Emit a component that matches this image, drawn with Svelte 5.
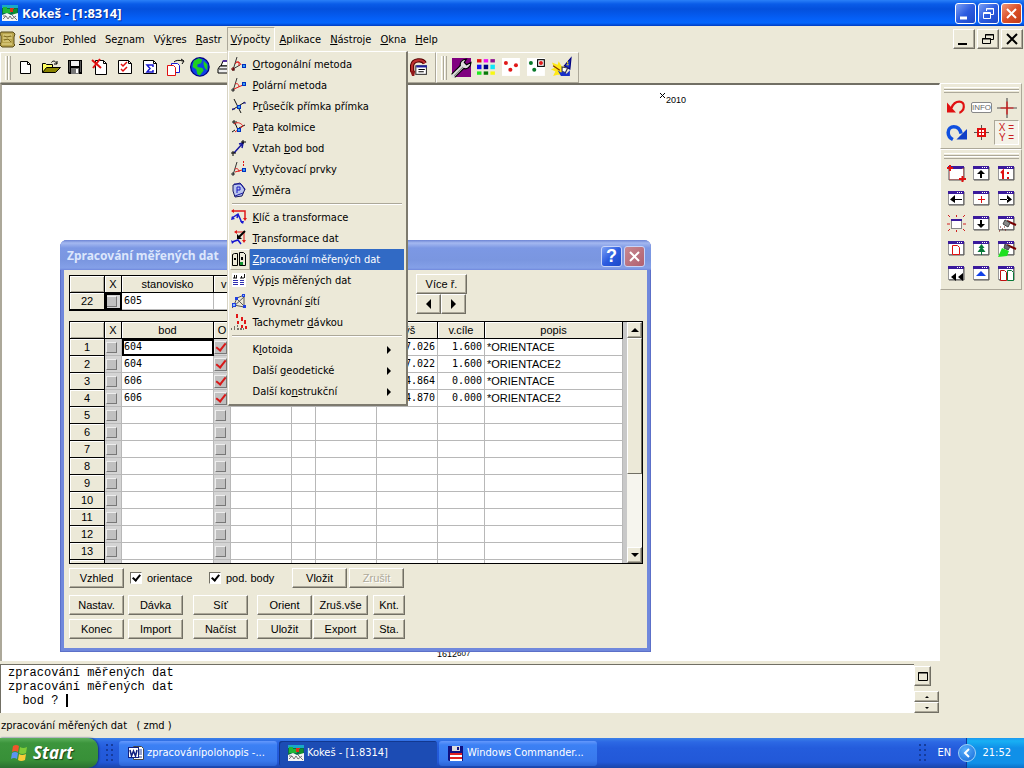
<script>
  const win =
    '<rect x="0.5" y="1.5" width="15" height="13" fill="#fff" stroke="#9a9a9a"/><path d="M16 2v13M1 15h15" stroke="#555"/><rect x="0" y="1" width="16" height="3" fill="#3a1a9c"/><path d="M9 2h1v1h-1zM11 2h1v1h-1zM13 2h1v1h-1z" fill="#fff"/>';
  const page = '<path d="M3.5 2.5h7l3 3v9h-10z" fill="#fff" stroke="#000"/><path d="M10.5 2.5v3h3" fill="none" stroke="#000"/>';
  const node = (x, y) => `<rect x="${x}.5" y="${y}.5" width="3" height="3" fill="#3aa0f0" stroke="#0030c0"/>`;

  const icons = {
    kokes:
      '<rect width="16" height="16" fill="#087048"/><path d="M0 0h16v3H0z" fill="#18a8c8"/><path d="M1 2h4v2h4v4H1z" fill="#20b838"/><path d="M8 3h4v4H8z" fill="#e03018"/><path d="M11 4h4v5h-4z" fill="#10902c"/><path d="M0 10l5-2 4 2 7-2v8H0z" fill="#f4f4f4"/><path d="M1 14l3-3 2 3 2-3 2 3 4-3M1 11h3M10 10l5 5" stroke="#777" fill="none"/>',
    scroll:
      '<path d="M1 1h12l2 2-1 3v7l1 1-2 2H2l-2-2 1-3V5L0 3z" fill="#b9a54e" stroke="#5b4c18"/><path d="M3 4h9M3 7h9M3 10h8M2 13h10" stroke="#e9dc93"/><path d="M4 5l3 1 4-1M4 9l4-1 3 3" stroke="#7d6a22" fill="none"/>',
    blank: page,
    open:
      '<path d="M0.5 13.5v-9h3l1 1h6v3" fill="#ffff60" stroke="#000"/><path d="M0.5 13.5l4-5h14l-5 5z" fill="#8a8400" stroke="#000"/><path d="M9.5 3.5c1-2 4-2 5 1M15 2v3h-3" fill="none" stroke="#000"/>',
    save:
      '<path d="M1 1h14v14H2l-1-1z" fill="#000"/><path d="M4 2h8v5H4z" fill="#f0f0f0"/><path d="M2 2h1v11H2zM13 2h1v11h-1z" fill="#555"/><path d="M4 9h8v6H4z" fill="#777"/><path d="M9 10h2v4H9z" fill="#fff"/>',
    del: '<path d="M3.5 1.500h8l3 3v11h-11z" fill="#fff" stroke="#000"/><path d="M11.5 1.500v3h3" fill="none" stroke="#000"/><path d="M0 1l9 8M8 0L1 9" stroke="#e01010" stroke-width="2" fill="none"/>',
    checks:
      '<path d="M1.5 1.5h10l3 3v10h-13z" fill="#fff" stroke="#000"/><path d="M11.5 1.5v3h3" fill="none" stroke="#000"/><path d="M4 5l2 2 4-4M4 10l2 2 4-4" stroke="#e01010" stroke-width="1.5" fill="none"/>',
    sum:
      '<path d="M1.5 1.5h10l3 3v10h-13z" fill="#fff" stroke="#000"/><path d="M11.5 1.5v3h3" fill="none" stroke="#000"/><path d="M11 8V6H5l3 3.500L5 13h6v-2" stroke="#1818d0" stroke-width="1.5" fill="none"/>',
    copies:
      '<path d="M4.500 4.500h6l2 2v7h-8z" fill="#fff" stroke="#1818d0"/><path d="M0.500 6.500h6l2 2v8h-8z" fill="#fff" stroke="#e01010"/><path d="M7 3c2-2 5-2 9-1M14 0l3 2-2 3" stroke="#000" fill="none"/>',
    globe:
      '<circle cx="8" cy="8" r="8" fill="#000080"/><circle cx="8" cy="8" r="7" fill="#1040e8"/><path d="M3 3l4-2 3 1-1 3-3 1v2l4 1 1 2-3 4-2-1-1-4-3-2zM11 3l3 3v5l-2-2-1-3z" fill="#20d020"/>',
    printer:
      '<path d="M4 7l2-5h8l-2 5z" fill="#fff" stroke="#000"/><path d="M6 1h8l-1 2H5z" fill="#50309a"/><path d="M3 7h12l-1 7H1v-4z" fill="#eee" stroke="#000"/><path d="M2 10h9" stroke="#000"/>',
    back:
      '<rect x="5.500" y="6.500" width="10" height="8" fill="#fff" stroke="#333"/><rect x="6" y="6" width="10" height="2" fill="#2020a0"/><path d="M8 10h6M8 12h5" stroke="#000"/><path d="M14 4C12 0 3 0 2 6v6" fill="none" stroke="#500" stroke-width="4"/><path d="M14 4C12 0 3 0 2 6v6" fill="none" stroke="#c03030" stroke-width="2"/><path d="M0 11h5l-1 5H2z" fill="#901818"/>',
    wrench:
      '<rect width="17" height="17" fill="#800080"/><path d="M1 16l8-8" stroke="#000" stroke-width="5"/><path d="M8 9C6 4 9 1 13 1l-2 3 2 2 4-2c0 4-4 7-7 5z" fill="#ddd" stroke="#000"/><path d="M0 17l10-10" stroke="#ddd" stroke-width="3"/><path d="M2 16l8-8" stroke="#888"/>',
    palette:
      '<path d="M0 1h4v3H0z" fill="#e01010"/><path d="M6 1h4v3H6z" fill="#f010f0"/><path d="M12 1h4v3h-4z" fill="#901090"/><path d="M0 6h4v4H0z" fill="#1010f0"/><path d="M6 6h4v4H6z" fill="#000080"/><path d="M12 6h4v4h-4z" fill="#10e8f8"/><path d="M0 12h4v3H0z" fill="#20e820"/><path d="M6 12h4v3H6z" fill="#087808"/><path d="M12 12h4v3h-4z" fill="#f8f810"/>',
    dots: '<rect width="16" height="16" fill="#fff"/><circle cx="3.500" cy="4.500" r="1.800" fill="#e01818"/><circle cx="12.500" cy="6.500" r="1.800" fill="#e01818"/><circle cx="7.500" cy="10.500" r="1.800" fill="#e01818"/>',
    dotsbox:
      '<rect width="16" height="16" fill="#fff"/><circle cx="3.500" cy="4.500" r="1.800" fill="#087828"/><circle cx="6.500" cy="10.500" r="1.800" fill="#087828"/><rect x="9.500" y="1.500" width="6" height="6" fill="#fff" stroke="#000"/><circle cx="12.500" cy="4.500" r="1.800" fill="#e01818"/>',
    wizard:
      '<path d="M0 4l5 2 1-3 3 5 4-2-3 6 5 3H5l-4 1 2-4-4-2 3-1z" fill="#ffe818"/><path d="M17 0l-1 10-5-3z" fill="#1830c8" stroke="#000080"/><path d="M14 3v2M13 6h2" stroke="#ffe818"/><path d="M9 8l5 1-2 4-3-1z" fill="#fff" stroke="#335"/><path d="M5 11l3 2 2-1 3 2 3-3v5H8z" fill="#1830c8"/><path d="M1 7l6 4" stroke="#803000"/>',
    ortho:
      '<path d="M2 14L6 1M1 14h3M9 9L2 13" stroke="#333" fill="none"/><path d="M4 8c2-3 5-2 6 1M5 6h3v4" stroke="#e01818" fill="none"/><path d="M0 13h4M2 11v4" stroke="#700"/>' + node(11, 8),
    polar:
      '<path d="M2 14L6 1M0 13h4M2 11v4" stroke="#333" fill="none"/><path d="M3 12l9-4M4 7c2-1 4 0 4 3" stroke="#e01818" fill="none"/>' + node(11, 5),
    inter: '<path d="M3 1l7 14M1 12l13-8" stroke="#111" fill="none"/><path d="M1 11h3M12 5h3" stroke="#1818a0"/>' + node(6, 7),
    pata:
      '<path d="M1 3h5M3 1v4M4 4l3 7M1 13l3-2M8 9l6-3" stroke="#111" fill="none"/><path d="M3 5c4-3 8 0 9 2M4 13l8-6" stroke="#e01818" fill="none"/>' + node(6, 9),
    vztah: '<path d="M3 13l9-10M8 4l4-1-1 5" stroke="#1818a0" stroke-width="1.500" fill="none"/><path d="M0 13h5M2 11v5M10 2h5M12 0v4" stroke="#000"/>',
    vytyc:
      '<path d="M2 14L6 1M0 13h4M2 11v4" stroke="#333" fill="none"/><path d="M4 11l7-2M4 8c2-1 4 0 4 3M12.500 0v2M12.500 3v2" stroke="#e01818" fill="none"/>' + node(11, 7),
    vymera:
      '<path d="M2 3l7-2 5 6-3 7-7 1-2-6z" fill="#b9c4ee" stroke="#181860"/><path d="M3 2l7 0 4 6M4 14l8-3" stroke="#1818a0" fill="none"/><path d="M6 11V5h3v3H6" stroke="#1818c0" fill="none"/>',
    klic:
      '<path d="M1 2h13v8" stroke="#e01818" stroke-width="1.500" fill="none"/><path d="M0 2l3-2v4zM12 9h4l-2 3z" fill="#e01818"/><path d="M1 9l6-4 4 9M7 5L6 9" stroke="#1818d0" stroke-width="1.500" fill="none"/><path d="M0 11l1-4 3 3zM9 12h4l-1 3z" fill="#1818d0"/>',
    trans:
      '<path d="M4 2h9v9" stroke="#e01818" fill="none"/><path d="M3 2l3-2v4zM11 10h4l-2 3z" fill="#e01818"/><path d="M14 1L7 8" stroke="#000" stroke-width="2"/><path d="M6 4v5h5z" fill="#000"/><path d="M1 12l6-2 3 4" stroke="#1818d0" stroke-width="1.500" fill="none"/><path d="M0 10l1 4 2-2z" fill="#1818d0"/>',
    zprac:
      '<path d="M1.500 3.500l2-1h3v12h-5zM8.500 1.500h4l2 2v11h-6z" fill="#ece9d8" stroke="#000"/><path d="M3 7h2v2H3zM10 6h2v3h-2z" fill="#000"/><path d="M9 11h3v3H9z" fill="#109030"/>',
    vypis:
      '<rect x="1" y="1" width="14" height="14" fill="#fff"/><path d="M2 6h4M9 6h4M3.500 3v3M5.500 3v3M10.500 4v2M13.500 2v4" stroke="#111"/><path d="M2 8.500h5M2 10.500h5M2 12.500h5M9 8.500h4M9 10.500h4M9 12.500h4" stroke="#3030b0"/>',
    vyrov: '<path d="M1 15L14 3M5 5l9 9M3 12l3-7 7-3v12z" stroke="#555" fill="none"/><path d="M1 10h4v4H1zM4 4h3v3H4zM11 1h3v3h-3zM12 12h3v3h-3z" fill="#2040e0"/><path d="M2 11h2v2H2zM12 2h1v1h-1z" fill="#8ac0ff"/>',
    tachy:
      '<path d="M5 0h2v4H5zM10 3h2v4h-2zM6 7h2v3H6zM13 6h2v4h-2zM10 11h2v3h-2zM14 12h2v3h-2z" fill="#e01818"/><path d="M0 15h1M3 13h1M3 15h1M6 12h1M6 15h2M9 15h2M12 15h1" stroke="#000"/>',
    undo: '<path d="M4 9C7 1 16 2 15 8c0 3-3 5-4 5" fill="none" stroke="#e01010" stroke-width="2"/><path d="M0 4v9h8z" fill="#e01010"/>',
    redo: '<path d="M12 9C10 1 1 2 1 8c0 3 2 5 4 6" fill="none" stroke="#1050e0" stroke-width="3"/><path d="M17 5v9H8z" fill="#1040c8"/>',
    cross: '<path d="M8.500 0v17M0 8.500h17" stroke="#555"/><path d="M8.500 3v11M3 8.500h11" stroke="#e01010"/>',
    target: '<path d="M8.500 1v15M1 8.500h15" stroke="#555"/><rect x="5" y="5" width="7" height="7" fill="#fff" stroke="#e01010" stroke-width="2"/><path d="M8.500 6v5M6 8.500h5" stroke="#e01010"/>',
    zoombox:
      win + '<rect x="1.500" y="3.500" width="14" height="11" fill="#fff" stroke="#901818" stroke-dasharray="1 1"/><path d="M2 2h12v2H2z" fill="#3a1a9c"/><path d="M-1 3h6M2 0v6M11 14h7M14.500 11v6" stroke="#e01010" stroke-width="2"/>',
    up: win + '<path d="M7 9h2v4H7zM4 9l4-4 4 4z" fill="#000"/>',
    down: win + '<path d="M7 5h2v4H7zM4 9l4 4 4-4z" fill="#000"/>',
    left: win + '<path d="M6 9h8v1H6zM7 5v8L2 9.500z" fill="#000"/>',
    right: win + '<path d="M2 9h8v1H2zM9 5v8l5-3.500z" fill="#000"/>',
    scale: win + '<path d="M3 8l2-2v8" stroke="#e01010" stroke-width="2" fill="none"/><path d="M9 7h2v2H9zM9 12h2v2H9z" fill="#e01010"/>',
    plus: win + '<path d="M8.500 6v7M5 9.500h7" stroke="#e01010"/>',
    shine:
      '<rect x="3.500" y="4.500" width="10" height="9" fill="#fff" stroke="#888"/><path d="M3 4h11v2H3z" fill="#3a1a9c"/><path d="M8.500 0v2M0 0l2 2M17 0l-2 2M-1 9h3M15 9h3M0 16l2-2M8.500 15v2M17 16l-2-2" stroke="#d02020"/>',
    brush: win + '<path d="M9 6l9 4" stroke="#700" stroke-width="2"/><path d="M7 5l5 3-2 4-5-3z" fill="#888" stroke="#444"/><path d="M2 12h1M4 14h1M6 12h1M1 16h1M7 15h1" stroke="#701010"/>',
    brushg: win + '<path d="M9 5l9 4" stroke="#700" stroke-width="2"/><path d="M7 4l5 3-2 3-4-2z" fill="#667" stroke="#444"/><path d="M4 8l7 3-2 5-9 1z" fill="#20e020"/>',
    winpage: win + '<path d="M4.500 5.500h5l2 2v7h-7z" fill="#fff" stroke="#e01010"/>',
    tree: win + '<path d="M8.500 4l3 4h-2l3 4H4.500l3-4h-2zM8 12h1v3H8z" fill="#087838"/>',
    rewind: win + '<path d="M8 8v8l-5-4zM15 8v8l-5-4z" fill="#000"/>',
    tri: win + '<path d="M8 6l5 5H3z" fill="#1040e8"/>',
    pages: win + '<path d="M2.500 5.500h4l2 2v8h-6z" fill="#fff" stroke="#c01010"/><path d="M9.500 5.500h4l2 2v8h-6z" fill="#fff" stroke="#087838"/>',
    word:
      '<path d="M5.500 1.500h8l2 2v11h-10z" fill="#fff" stroke="#444"/><path d="M11 5h3M11 7h3M11 9h3M8 12h6" stroke="#2040a0"/><rect x="0.500" y="2.500" width="10" height="10" fill="#fff" stroke="#102080"/><path d="M2 5l1.500 6 2-5 2 5L9 5" stroke="#102080" stroke-width="1.500" fill="none"/>',
    floppy: '<path d="M0 1h15v15H1l-1-1z" fill="#101080"/><path d="M4 1h8v5H4z" fill="#ddd"/><path d="M9 2h2v3H9z" fill="#101080"/><path d="M2 8h12v8H2z" fill="#fff"/><path d="M2 8h12v2H2zM2 12h12v2H2z" fill="#e02020"/>',
  };

  const menus = [
    ['', 'S', 'oubor'], ['', 'P', 'ohled'], ['Se', 'z', 'nam'], ['Vý', 'k', 'res'], ['', 'R', 'astr'],
    ['', 'V', 'ýpočty'], ['', 'A', 'plikace'], ['', 'N', 'ástroje'], ['', 'O', 'kna'], ['', 'H', 'elp'],
  ];
  const groups = [
    [
      ['ortho', '', 'O', 'rtogonální metoda'], ['polar', '', 'P', 'olární metoda'], ['inter', 'P', 'r', 'ůsečík přímka přímka'],
      ['pata', 'P', 'a', 'ta kolmice'], ['vztah', 'Vztah ', 'b', 'od bod'], ['vytyc', 'V', 'y', 'tyčovací prvky'], ['vymera', '', 'V', 'ýměra'],
    ],
    [
      ['klic', '', 'K', 'líč a transformace'], ['trans', '', 'T', 'ransformace dat'], ['zprac', '', 'Z', 'pracování měřených dat'],
      ['vypis', 'Výp', 'i', 's měřených dat'], ['vyrov', 'Vyrovnání ', 's', 'ítí'], ['tachy', 'Tachymetr ', 'd', 'ávkou'],
    ],
    [['', 'K', 'l', 'otoida'], ['', 'Další ', 'g', 'eodetické'], ['', 'Další ko', 'n', 'strukční']],
  ];
  const tools = ['blank', 'open', 'save', 'del', 'checks', 'sum', 'copies', 'globe', 'printer'];
  const tools2 = ['wrench', 'palette', 'dots', 'dotsbox', 'wizard'];
  const side = ['zoombox', 'up', 'scale', 'left', 'plus', 'right', 'shine', 'down', 'brush', 'winpage', 'tree', 'brushg', 'rewind', 'tri', 'pages'];
  const data = [
    ['604', '287.026', '1.600', '*ORIENTACE'],
    ['604', '287.022', '1.600', '*ORIENTACE2'],
    ['606', '294.864', '0.000', '*ORIENTACE'],
    ['606', '294.870', '0.000', '*ORIENTACE2'],
  ];
  const rows = Array.from({ length: 14 }, (_, i) => data[i] ?? null);
  const actions = ['Nastav.', 'Dávka', 'Síť', 'Orient', 'Zruš.vše', 'Knt.', 'Konec', 'Import', 'Načíst', 'Uložit', 'Export', 'Sta.'];
  let active = $state('zprac');
</script>

{#snippet icon(name, size = 17)}
  <svg class="ic" width={size} height={size} viewBox="0 0 17 17" aria-hidden="true">{@html icons[name]}</svg>
{/snippet}

<div class="app">
  <header class="title">
    {@render icon('kokes')}
    <h1>Kokeš - [1:8314]</h1>
    <div class="caps">
      <button class="cap" aria-label="Minimalizovat"><svg width="19" height="19"><path d="M4 14h7" stroke="#fff" stroke-width="3" /></svg></button>
      <button class="cap" aria-label="Obnovit"><svg width="19" height="19"><path d="M7.500 7V4.500h7v6H12M7 5h8" fill="none" stroke="#fff" /><path d="M4.500 8.500h7v6h-7zM4 9.500h8" fill="none" stroke="#fff" /></svg></button>
      <button class="cap red" aria-label="Zavřít"><svg width="19" height="19"><path d="M5 5l9 9M14 5l-9 9" stroke="#fff" stroke-width="2" /></svg></button>
    </div>
  </header>

  <nav class="menubar">
    {@render icon('scroll')}
    {#each menus as [a, u, b], i}
      <div class="mwrap">
        <button class="mitem" class:open={i === 5}>{a}<u>{u}</u>{b}</button>
        {#if i === 5}
          <div class="dropdown" role="menu">
            {#each groups as g, gi}
              {#if gi}<hr />{/if}
              {#each g as [ic, pre, key, post]}
                <button class="drow" class:hot={ic === active} role="menuitem" onclick={() => (active = ic)}>
                  <span class="dic">{#if ic}{@render icon(ic)}{/if}</span>
                  <span class="dtext">{pre}<u>{key}</u>{post}</span>
                  {#if !ic}<svg class="sub" width="5" height="8"><path d="M0 0v8l4-4z" /></svg>{/if}
                </button>
              {/each}
            {/each}
          </div>
        {/if}
      </div>
    {/each}
    <div class="mdi">
      <button class="raised" aria-label="Minimalizovat okno"><svg width="18" height="16"><path d="M3 13h9" stroke="#000" stroke-width="2" /></svg></button>
      <button class="raised" aria-label="Obnovit okno"><svg width="18" height="16"><path d="M6.500 8V3.500h8v5H12M6 4h9M3.500 7.500h8v5h-8zM3 8h9" fill="none" stroke="#000" /></svg></button>
      <button class="raised" aria-label="Zavřít okno"><svg width="18" height="16"><path d="M4 3l10 10M14 3L4 13" stroke="#000" stroke-width="2" /></svg></button>
    </div>
  </nav>

  <div class="toolbars">
    <div class="bar first">
      <i class="grip"></i>
      {#each tools as t}<button class="tool" aria-label={t}>{@render icon(t, t === 'globe' ? 21 : 17)}</button>{/each}
      <button class="tool last" aria-label="back">{@render icon('back', 18)}</button>
    </div>
    <div class="bar">
      <i class="grip"></i>
      {#each tools2 as t}<button class="tool" aria-label={t}>{@render icon(t, 19)}</button>{/each}
    </div>
  </div>

  <div class="work">
    <div class="left">
      <main class="canvas">
        <span class="pt p1"><svg width="6" height="6"><path d="M0 0l5 5M5 0L0 5" stroke="#000" /></svg>2010</span>
        <span class="pt p2">1612<sup>607</sup></span>
      </main>
      <section class="cmd">
        <pre>zpracování měřených dat
zpracování měřených dat
  bod ? <b class="caret"></b></pre>
        <div class="cmdside">
          <button class="raised max" aria-label="Zvětšit"><svg width="12" height="11"><path d="M1.500 1.500h9v8h-9zM1 2h10" fill="none" stroke="#000" /></svg></button>
          <div class="spin">
            <button class="raised" aria-label="Nahoru"><svg width="4" height="2"><path d="M0 2l2-2 2 2z" /></svg></button>
            <button class="raised" aria-label="Dolů"><svg width="4" height="2"><path d="M0 0l2 2 2-2z" /></svg></button>
          </div>
        </div>
      </section>
    </div>
    <aside>
      <div class="panel">
        <i class="hgrip"></i>
        <div class="cells">
          <button class="tool" aria-label="Zpět">{@render icon('undo', 19)}</button>
          <button class="tool info"><span>INFO</span></button>
          <button class="tool" aria-label="Kříž">{@render icon('cross', 20)}</button>
          <button class="tool" aria-label="Znovu">{@render icon('redo', 20)}</button>
          <button class="tool" aria-label="Cíl">{@render icon('target')}</button>
          <button class="tool xy"><span>X =<br />Y =</span></button>
        </div>
      </div>
      <div class="panel">
        <i class="hgrip"></i>
        <div class="cells">
          {#each side as s}<button class="tool" aria-label={s}>{@render icon(s)}</button>{/each}
        </div>
      </div>
    </aside>
  </div>

  <div class="status">zpracování měřených dat &nbsp; ( zmd )</div>

  <footer class="taskbar">
    <button class="start">
      <svg width="20" height="20" viewBox="0 0 20 20"><path d="M3 3q3-2 6 0L8 9q-3-2-6 0z" fill="#f0562c" /><path d="M10 4q3 2 7 0l-1 6q-4 2-7 0z" fill="#7fcc38" /><path d="M2 10q3-2 6 0l-1 6q-3-2-6 0z" fill="#5c94f0" /><path d="M9 11q3 2 7 0l-1 6q-4 2-7 0z" fill="#f8cc38" /></svg>
      Start
    </button>
    <i class="dotgrip"></i>
    <button class="task">{@render icon('word')}zpracovánípolohopis -...</button>
    <button class="task on">{@render icon('kokes')}Kokeš - [1:8314]</button>
    <button class="task">{@render icon('floppy')}Windows Commander...</button>
    <i class="dotgrip end"></i>
    <span class="lang">EN</span>
    <div class="tray">
      <button class="chev" aria-label="Zobrazit ikony"><svg width="16" height="16"><path d="M10 4L6 8l4 4" fill="none" stroke="#fff" stroke-width="2" /></svg></button>
      <time>21:52</time>
    </div>
  </footer>

  <div class="dialog" role="dialog" aria-labelledby="dt">
    <div class="dtitle">
      <h2 id="dt">Zpracování měřených dat</h2>
      <button class="cap" aria-label="Nápověda">?</button>
      <button class="cap red" aria-label="Zavřít dialog"><svg width="19" height="19"><path d="M5 5l9 9M14 5l-9 9" stroke="#fff" stroke-width="2" /></svg></button>
    </div>
    <div class="dbody">
      <div class="top">
        <div class="box small">
          <table>
            <colgroup><col class="c0" /><col class="c1" /><col class="c2" /><col /></colgroup>
            <thead><tr><th class="corner"></th><th>X</th><th>stanovisko</th><th class="l">v</th></tr></thead>
            <tbody><tr><th>22</th><td class="ck sel"><input type="checkbox" aria-label="X 22" /></td><td class="num">605</td><td></td></tr></tbody>
          </table>
        </div>
        <div class="nav">
          <button class="raised more">Více ř.</button>
          <div>
            <button class="raised arr" aria-label="Předchozí"><svg width="5" height="10"><path d="M5 0v10L0 5z" /></svg></button><button class="raised arr" aria-label="Další"><svg width="5" height="10"><path d="M0 0v10l5-5z" /></svg></button>
          </div>
        </div>
      </div>
      <div class="box big">
        <table>
          <colgroup><col class="c0" /><col class="c1" /><col class="c2" /><col class="c1" /><col class="c4" /><col class="c5" /><col class="c4" /><col class="c4" /><col class="c6" /><col /></colgroup>
          <thead><tr><th class="corner"></th><th>X</th><th>bod</th><th>O</th><th></th><th></th><th></th><th>výš</th><th>v.cíle</th><th>popis</th></tr></thead>
          <tbody>
            {#each rows as r, i}
              <tr>
                <th>{i < 13 ? i + 1 : ''}</th>
                <td class="ck"><input type="checkbox" aria-label="X {i + 1}" /></td>
                <td class="num" class:sel={i === 0}>{r ? r[0] : ''}</td>
                <td class="ck"><input type="checkbox" class="o" aria-label="O {i + 1}" checked={!!r} /></td>
                <td></td><td></td><td></td>
                <td class="num r">{r ? r[1] : ''}</td>
                <td class="num r">{r ? r[2] : ''}</td>
                <td class="txt">{r ? r[3] : ''}</td>
              </tr>
            {/each}
          </tbody>
        </table>
        <div class="scroll">
          <button class="raised sb" aria-label="Posun nahoru"><svg width="8" height="4"><path d="M0 4l4-4 4 4z" /></svg></button>
          <div class="thumb"></div>
          <div class="track"></div>
          <button class="raised sb" aria-label="Posun dolů"><svg width="8" height="4"><path d="M0 0l4 4 4-4z" /></svg></button>
        </div>
      </div>
      <div class="opts">
        <button class="raised btn">Vzhled</button>
        <label><input type="checkbox" checked />orientace</label>
        <label class="second"><input type="checkbox" checked />pod. body</label>
        <button class="raised btn">Vložit</button>
        <button class="raised btn" disabled>Zrušit</button>
      </div>
      <div class="acts">
        {#each actions as a, i}<button class="raised btn" class:narrow={i % 6 === 5}>{a}</button>{/each}
      </div>
    </div>
  </div>
</div>

<style>
  :global(body) { margin: 0; background: #ece9d8; }
  .app { position: relative; display: flex; flex-direction: column; min-height: 100vh; overflow: hidden; background: #ece9d8; color: #000; font: 11px/14px "DejaVu Sans Condensed", "Noto Sans", sans-serif; }
  .app * { box-sizing: border-box; }
  button { font: inherit; color: inherit; background: none; border: 0; padding: 0; margin: 0; }
  svg { display: block; flex: none; }
  .ic { overflow: visible; }
  h1, h2 { margin: 0; font: bold 13px/20px "Noto Sans", "Open Sans", sans-serif; white-space: nowrap; }
  h2 { font-size: 12px; }

  .title { display: flex; align-items: center; gap: 3px; height: 26px; padding: 0 2px; color: #fff; background: linear-gradient(#2a80f8 0, #0a5ce8 4px, #0450dc 9px, #0560f8 19px, #0466fc 23px, #003cc0 26px); }
  .title h1 { text-shadow: 1px 1px #0a2c90; }
  .caps { display: flex; gap: 2px; margin-left: auto; }
  .cap { display: flex; align-items: center; justify-content: center; width: 21px; height: 21px; border: 1px solid #fff; border-radius: 3px; background: linear-gradient(135deg, #7ca0f4, #2c5ce0 50%, #1c48c8); color: #fff; }
  .cap.red { background: linear-gradient(135deg, #f09878, #dc5028 50%, #c03c18); }

  .menubar { display: flex; align-items: center; height: 26px; padding: 0 1px 0 0; }
  .menubar > .ic { margin-right: -2px; }
  .mwrap { position: relative; }
  .mitem { display: block; height: 24px; padding: 0 4px 0 3px; border: 1px solid transparent; line-height: 24px; white-space: nowrap; }
  .mitem.open { border-color: #aca899 #fff #ece9d8 #aca899; }
  .dropdown { position: absolute; z-index: 5; left: 1px; top: 24px; width: 180px; padding: 2px 2px 2px 1px; background: #ece9d8; border: 1px solid #fff; border-right: 2px solid #7d7a6e; border-bottom: 2px solid #7d7a6e; box-shadow: -1px 0 #d8d4c4; }
  .drow { display: flex; align-items: center; width: 100%; height: 21px; text-align: left; white-space: nowrap; }
  .dic { flex: none; display: flex; align-items: center; justify-content: center; width: 20px; height: 21px; }
  .dtext { flex: 1; height: 21px; line-height: 22px; padding-left: 3px; }
  .hot .dtext { background: #316ac5; color: #fff; }
  .hot .dic { border: 1px solid; border-color: #fff #aca899 #aca899 #fff; }
  .sub { margin-right: 12px; }
  hr { margin: 2px 2px; height: 2px; border: 0; border-top: 1px solid #aca899; border-bottom: 1px solid #fff; }
  .mdi { display: flex; gap: 2px; margin-left: auto; }
  .mdi .raised { width: 22px; height: 20px; }
  .raised { display: flex; align-items: center; justify-content: center; background: #ece9d8; border: 1px solid; border-color: #fff #716f64 #716f64 #fff; box-shadow: inset -1px -1px #aca899; }

  .toolbars { display: flex; height: 31px; }
  .bar { display: flex; align-items: center; border: 1px solid; border-color: #fff #aca899 #aca899 #fff; padding: 0 4px; }
  .first { width: 436px; }
  .grip { flex: none; width: 6px; height: 24px; margin-right: 2px; border: 1px solid; border-color: #fff #aca899 #aca899 #fff; border-width: 0 1px; background: linear-gradient(90deg, #ece9d8 1px, #aca899 1px, #aca899 2px, #fff 2px, #fff 3px, #ece9d8 3px); }
  .tool { display: flex; align-items: center; justify-content: center; width: 25px; height: 25px; flex: none; }
  .last { margin-left: auto; }

  .work { flex: 1; display: flex; min-height: 0; }
  .left { flex: 1; display: flex; flex-direction: column; }
  .canvas { position: relative; flex: 1; background: #fff; border-top: 2px solid #716f64; border-left: 2px solid #aca899; border-right: 1px solid #fff; overflow: hidden; }
  .pt { position: absolute; display: flex; font: 9px/9px "Liberation Sans", sans-serif; }
  .p1 { left: 658px; top: 9px; align-items: flex-start; padding-top: 2px; }
  .p1 svg { margin-top: -3px; }
  .p2 { left: 435px; bottom: 2px; }
  .p2 sup { font-size: 8px; line-height: 8px; vertical-align: top; }
  .cmd { display: flex; height: 52px; border-top: 3px solid #ece9d8; background: #fff; }
  .cmd pre { flex: 1; margin: 0; border-top: 1px solid #716f64; border-left: 1px solid #716f64; padding: 1px 7px; font: 12px/14px "Liberation Mono", monospace; }
  .caret { display: inline-block; width: 2px; height: 13px; background: #000; vertical-align: top; }
  .cmdside { display: flex; flex-direction: column; justify-content: space-between; width: 26px; padding-top: 2px; background: #ece9d8; }
  .max { width: 17px; height: 20px; }
  .spin .raised { width: 25px; height: 11px; }
  aside { flex: none; width: 84px; padding-right: 2px; }
  .panel { border: 1px solid; border-color: #fff #aca899 #aca899 #fff; padding: 3px 2px 3px 3px; }
  .hgrip { display: block; height: 6px; margin-bottom: 2px; border-top: 1px solid #fff; border-bottom: 1px solid #aca899; background: linear-gradient(#ece9d8 1px, #aca899 1px, #aca899 2px, #fff 2px, #fff 3px, #ece9d8 3px); }
  .cells { display: grid; grid-template-columns: repeat(3, 25px); }
  .info span { border: 1px solid #888; background: #fff; color: #666; font: 8px/9px "Liberation Sans", sans-serif; border-radius: 2px; }
  .xy { border: 1px solid; border-color: #aca899 #fff #fff #aca899; background: #f4f2e8; color: #c82020; font: 10px/10px "Liberation Sans", sans-serif; }

  .status { height: 25px; padding: 0 1px; line-height: 25px; }

  .taskbar { display: flex; align-items: center; height: 30px; color: #fff; background: linear-gradient(#3a80e8 0, #2c68e4 4px, #245cdc 10px, #2258d8 24px, #1a44a8 30px); }
  .start { display: flex; align-items: center; gap: 3px; width: 98px; height: 30px; padding-left: 10px; border-radius: 0 10px 10px 0; background: linear-gradient(#5cb05c 0, #3c953c 5px, #389038 22px, #2a7030 30px); font: italic bold 17px/28px "Open Sans", "Noto Sans", sans-serif; text-shadow: 1px 1px 1px #184018; box-shadow: 1px 0 2px #14307c; }
  .dotgrip { width: 8px; height: 20px; margin: 0 6px 0 7px; background: radial-gradient(circle at 2px 2px, #163c9c 1px, transparent 1px) 0 0/5px 5px; }
  .dotgrip.end { margin: 0 6px 0 auto; }
  .task { display: flex; align-items: center; gap: 2px; flex: 0 1 158px; height: 25px; margin-right: 2px; padding-left: 9px; border-radius: 3px; background: linear-gradient(#6498fc, #3c80f4 4px, #3878ec 20px, #2c64d4); white-space: nowrap; overflow: hidden; }
  .task.on { background: #1c4cb4; box-shadow: inset 1px 1px #123890; }
  .lang { width: 34px; padding-left: 5px; }
  .tray { display: flex; align-items: center; height: 30px; padding-right: 13px; background: linear-gradient(#1c98f0, #18b0f4 3px, #1090e8 10px, #1090e8 25px, #0c70c8 30px); border-left: 1px solid #103898; }
  .chev { display: flex; align-items: center; justify-content: center; width: 18px; height: 18px; margin: 0 6px 0 -9px; border-radius: 50%; border: 1px solid #a0d4f8; background: radial-gradient(circle at 40% 30%, #58b0fc, #1468d8); }

  .dialog { position: absolute; z-index: 2; left: 60px; top: 240px; width: 591px; padding: 0 4px 4px; border-radius: 7px 7px 0 0; background: #7088dc; box-shadow: inset 1px 0 #5c70c8, inset -1px -1px #5c70c8; font-family: "Liberation Sans", sans-serif; }
  .dtitle { display: flex; align-items: center; gap: 2px; height: 30px; margin: 0 -4px; padding: 2px 6px 0 7px; border-radius: 7px 7px 0 0; background: linear-gradient(#6c84d4 0, #a4b8f0 3px, #7c98e4 8px, #7a96e0 20px, #84a0e8 28px, #7088dc 30px); color: #dce6fc; }
  .dtitle h2 { flex: 1; }
  .dtitle .cap { border-color: #c8d4f8; font-size: 18px; font-weight: bold; }
  .dtitle .red { background: linear-gradient(135deg, #c88890, #b06070); }
  .dbody { background: #ece9d8; padding: 4px 4px 9px 5px; }
  .top { display: flex; gap: 12px; }
  .nav > div { display: flex; }
  .more { width: 51px; height: 20px; }
  .arr { width: 25px; height: 20px; }
  .box { border: 1px solid #000; background: #fff; overflow: hidden; }
  .small { width: 335px; height: 36px; margin-top: 1px; }
  .big { display: flex; height: 243px; margin: 7px 0 4px; }
  table { width: 100%; height: max-content; table-layout: fixed; border-collapse: separate; border-spacing: 0; }
  .big table { flex: 1; width: 0; border-right: 4px solid #c8c8c8; }
  .c0 { width: 35px; } .c1 { width: 17px; } .c2 { width: 92px; } .c4 { width: 61px; } .c5 { width: 24px; } .c6 { width: 47px; }
  th, td { height: 17px; padding: 0; line-height: 14px; border-right: 1px solid #b8b8b8; border-bottom: 1px solid #b8b8b8; white-space: nowrap; overflow: hidden; }
  th { background: #ece9d8; font-weight: normal; border-color: #000; box-shadow: inset 1px 1px #fff; }
  .corner { box-shadow: inset 1px 1px #fff, inset -1px -1px #aca899; }
  th.l { text-align: left; padding-left: 7px; }
  .num { font: 10px/14px "DejaVu Sans Mono", monospace; padding-left: 2px; }
  .r { text-align: right; padding: 0 2px 0 0; }
  .txt { padding-left: 2px; }
  .sel { outline: 2px solid #000; outline-offset: -2px; }
  .ck { background: #d4d4d4; }
  .ck input { appearance: none; display: block; width: 11px; height: 11px; margin: 0 0 0 1px; border: 1px solid; border-color: #eee #777 #777 #eee; background: #c0c0c0; }
  .ck .o:checked { position: relative; width: 13px; height: 13px; margin: 0; }
  .ck .o:checked::before { content: ""; position: absolute; left: 3px; top: -1px; width: 4px; height: 8px; border: solid #d81818; border-width: 0 2px 2px 0; transform: rotate(38deg); }
  .scroll { display: flex; flex-direction: column; width: 15px; }
  .sb { height: 16px; flex: none; }
  .thumb { height: 136px; background: #ece9d8; border: 1px solid; border-color: #fff #716f64 #716f64 #fff; }
  .track { flex: 1; background: #f6f5ee; }
  .opts { display: flex; align-items: center; height: 20px; margin-bottom: 7px; }
  .opts label { display: flex; align-items: center; gap: 5px; width: 79px; margin-left: 6px; }
  .opts label.second { width: 83px; margin-left: 0; }
  .opts label input { appearance: none; width: 12px; height: 12px; margin: 0; border: 1px solid; border-color: #716f64 #fff #fff #716f64; background: #fff; position: relative; }
  .opts label input:checked::before { content: ""; position: absolute; left: 3px; top: 0; width: 3px; height: 6px; border: solid #000; border-width: 0 2px 2px 0; transform: rotate(40deg); }
  .opts .btn + .btn { margin-left: 2px; }
  .btn { width: 55px; height: 20px; white-space: nowrap; }
  .btn:disabled { color: #aca899; text-shadow: 1px 1px #fff; }
  .acts { display: grid; grid-template-columns: 59px 65px 64px 56px 60px 32px; row-gap: 4px; }
  .btn.narrow { width: 32px; }
</style>
